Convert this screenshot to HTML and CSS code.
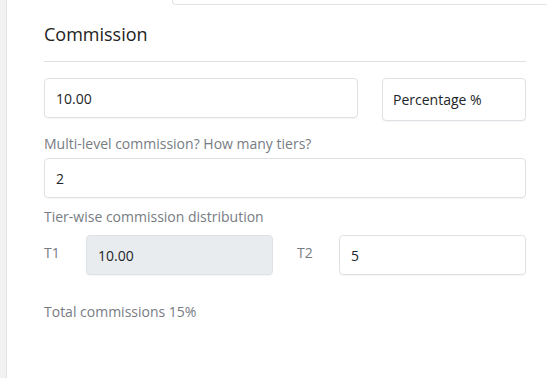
FILE: index.html
```html
<!DOCTYPE html>
<html lang="en">
<head>
    <meta charset="UTF-8">
    <meta name="viewport" content="width=device-width, initial-scale=1.0">
    <title>Commission</title>
    <link rel="stylesheet" href="styles.css">
</head>
<body>
    <div class="layout">
        <div class="sidebar"></div>
        <div class="main">
            <div class="top-card"></div>

            <div class="panel">
                <h2 class="panel-title">Commission</h2>

                <!-- amount + type -->
                <div class="row-amount">
                    <input type="text" class="field" value="10.00">
                    <select class="field field-select">
                        <option>Percentage %</option>
                        <option>Fixed</option>
                    </select>
                </div>

                <label class="field-label" for="tiers">Multi-level commission? How many tiers?</label>
                <input type="text" id="tiers" class="field" value="2">

                <div class="field-label tier-label">Tier-wise commission distribution</div>
                <div class="tier-row">
                    <div class="tier">
                        <span class="tier-name">T1</span>
                        <input type="text" class="field" value="10.00" disabled>
                    </div>
                    <div class="tier">
                        <span class="tier-name">T2</span>
                        <input type="text" class="field" value="5">
                    </div>
                </div>

                <div class="total">Total commissions 15%</div>
            </div>
        </div>
    </div>
</body>
</html>
```

FILE: styles.css
```css
body, html {
    margin: 0;
    padding: 0;
    height: 100%;
}
body {
    font-family: "Open Sans", "Liberation Sans", sans-serif;
    font-size: 14px;
    line-height: 21px;
    color: #212529;
    background: #fff;
}
.layout {
    display: flex;
    min-height: 100vh;
}
.sidebar {
    width: 6px;
    background-color: #f2f2f2;
    border-right: 1px solid #e4e4e4;
}
.main {
    flex: 1;
    background-color: #fff;
}

/* bottom edge of the card above */
.top-card {
    margin-left: 165px;
    height: 4px;
    border-left: 1px solid #dfe3e8;
    border-bottom: 1px solid #dfe3e8;
    border-bottom-left-radius: 4px;
}

.panel {
    padding: 0 21px 0 37px;
}
.panel-title {
    margin: 18px 0 0;
    padding-bottom: 16px;
    border-bottom: 1px solid #e0e0e0;
    font-size: 18px;
    line-height: 22px;
    font-weight: 400;
    color: #222;
}

/* Inputs */
.field {
    display: block;
    box-sizing: border-box;
    width: 100%;
    height: 40px;
    padding: 0 11px;
    border: 1px solid #dee2e6;
    border-radius: 4px;
    background-color: #fff;
    box-shadow: 0 1px 1px rgba(0, 0, 0, 0.04);
    font-family: inherit;
    font-size: 14px;
    color: #212529;
    outline: none;
}
.field:disabled {
    background-color: #e9ecef;
    color: #212529;
}
.field-select {
    height: 43px;
    padding: 0 10px;
    appearance: none;
    -webkit-appearance: none;
}

.row-amount {
    display: flex;
    gap: 24px;
    align-items: flex-start;
    margin-top: 16px;
}
.row-amount .field {
    flex: 0 0 314px;
}
.row-amount .field-select {
    flex: 1;
}

.field-label {
    display: block;
    margin: 12px 0 4px;
    color: #777c82;
}
.tier-label {
    margin: 8px 0 8px;
}

.tier-row {
    display: flex;
    gap: 24px;
}
.tier {
    flex: 1;
    display: flex;
    align-items: flex-start;
}
.tier-name {
    flex: 0 0 42px;
    padding-top: 7px;
    color: #777c82;
}

.total {
    margin-top: 26px;
    color: #777c82;
}
```
